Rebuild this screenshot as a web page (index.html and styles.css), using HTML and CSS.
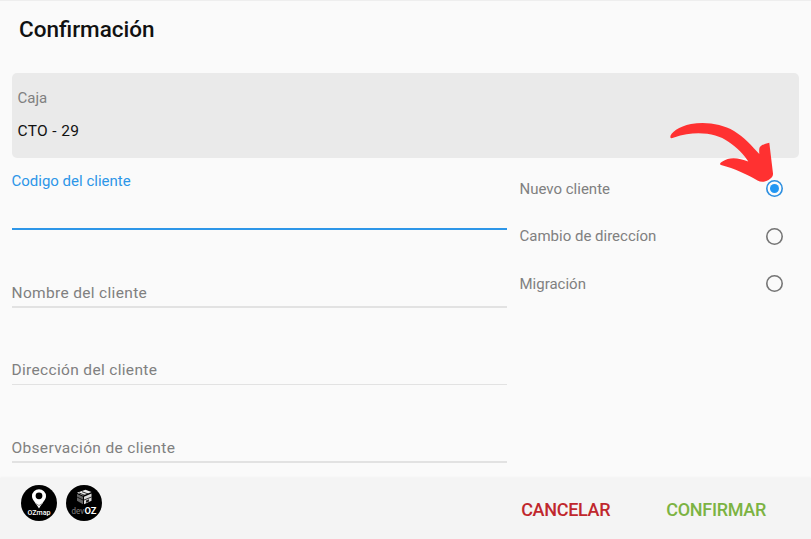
FILE: index.html
```html
<!DOCTYPE html>
<html lang="es">
<head>
  <meta charset="UTF-8">
  <meta name="viewport" content="width=device-width, initial-scale=1.0">
  <title>Confirmación</title>
  <link rel="stylesheet" href="styles.css">
</head>
<body>
  <main class="page">
    <h1 class="title"><span>Confirmación</span></h1>
    <section class="box">
      <div class="box-label"><span>Caja</span></div>
      <div class="box-value"><span>CTO - 29</span></div>
    </section>
    <form class="form">
      <div class="fields">
        <div class="field active"><label>Codigo del cliente</label></div>
        <div class="field"><label>Nombre del cliente</label></div>
        <div class="field thin"><label>Dirección del cliente</label></div>
        <div class="field"><label>Observación de cliente</label></div>
      </div>
      <div class="options">
        <div class="option"><span>Nuevo cliente</span><i class="radio checked"></i></div>
        <div class="option"><span>Cambio de direccíon</span><i class="radio"></i></div>
        <div class="option"><span>Migración</span><i class="radio"></i></div>
      </div>
    </form>
  </main>
  <footer class="footer">
    <div class="logos">
      <svg class="logo" viewBox="0 0 36 36">
        <circle cx="18" cy="18" r="18" fill="#000"/>
        <path d="M18 4.300a7 7 0 0 0-7 7c0 3.500 3.400 6 7 12.200 3.600-6.200 7-8.700 7-12.200a7 7 0 0 0-7-7z" fill="#fff"/>
        <circle cx="18" cy="10.800" r="3.400" fill="#000"/>
        <path d="M14 18.200l4 2.300 4-2.300" fill="none" stroke="#777" stroke-width=".8"/>
        <text class="logo-text small" x="6.500" y="30" textLength="23" lengthAdjust="spacingAndGlyphs">OZmap</text>
      </svg>
      <svg class="logo" viewBox="0 0 36 36">
        <circle cx="18" cy="18" r="18" fill="#000"/>
        <path d="M11 7.800l8.500-3 6 2.200-8.500 3.500z" fill="#eee"/>
        <path d="M11 9l6 2.700v7.500l-6-3.500z" fill="#666"/>
        <path d="M18 11.700l7.500-3.200v7.300L18 19.300z" fill="#ddd"/>
        <path d="M13 7.900l6 2.500M16 6.700l6 2.200M18 15l7.500-3M11 12l6 3" stroke="#000" stroke-width=".8"/>
        <path d="M20 15.500l3-1.200v2.200l-3 1.300z" fill="#222"/>
        <text class="logo-text" x="5.500" y="28.500" textLength="12.500" lengthAdjust="spacingAndGlyphs" fill-opacity=".5">dev</text>
        <text class="logo-text oz" x="18.500" y="28.500" textLength="12" lengthAdjust="spacingAndGlyphs">OZ</text>
      </svg>
    </div>
    <button class="cancel">CANCELAR</button>
    <button class="confirm">CONFIRMAR</button>
  </footer>
  <svg class="arrow" viewBox="669 122 106 62">
    <path d="M670.500 137.700C669 134 678 126.500 691 124C706 121.500 722 124 734 131C744 137 752 146 759.300 154C759 149 759 147 761.500 145.500C764 144 766.500 143.500 769.300 142.700L773 173.500C773.300 177 771 178.500 768.500 180C765 182 761 182.500 757.500 180.500C746 174 735 168.500 721 165C719 164 720.500 163 722 161.800C730 156 739 158 748.300 161.500C744 155 738 148 728 141.500C717 133.500 696 130 674 137.500C672 138.200 671 138.500 670.500 137.700Z"/>
  </svg>
</body>
</html>
```
FILE: styles.css
```css
* {
  box-sizing: border-box;
}
body {
  margin: 0;
  height: 539px;
  display: flex;
  flex-direction: column;
  overflow: hidden;
  background: #fafafa;
  border-top: 1px solid #eee;
  font-family: Roboto, sans-serif;
  font-size: 15px;
  color: #808080;
}
.page {
  flex: 1;
  padding: 0 12px 0 11.500px;
}
.title {
  margin: 0;
  padding: 14px 7.500px 0;
  height: 72px;
  font-size: 22.500px;
  line-height: 29px;
  font-weight: 500;
  color: #111;
}
.box {
  height: 85px;
  padding: 15px 6px;
  border-radius: 5px;
  background: #eaeaea;
  line-height: 20px;
}
.box-value {
  margin-top: 13px;
  color: #111;
  font-size: 15.500px;
  letter-spacing: .35px;
}
.form {
  display: flex;
  gap: 13px;
}
.fields {
  width: 495px;
}
.field {
  height: 77.600px;
  display: flex;
  align-items: flex-end;
  padding-bottom: 2.500px;
  border-bottom: 2px solid #e2e2e2;
  font-size: 15.500px;
  line-height: 20px;
  letter-spacing: .33px;
}
.field.thin {
  padding-bottom: 4px;
  border-bottom-width: 1px;
}
.field.active {
  height: 72px;
  align-items: flex-start;
  padding-top: 13px;
  border-color: #2d96e8;
  color: #2d96e8;
  font-size: 15px;
  letter-spacing: 0;
}
.options {
  flex: 1;
  padding: 7px 16px 0 0;
}
.option {
  height: 47.500px;
  display: flex;
  align-items: center;
  justify-content: space-between;
}
.radio {
  width: 17px;
  height: 17px;
  display: flex;
  border-radius: 50%;
  box-shadow: inset 0 0 0 1.600px #757575;
}
.radio.checked {
  box-shadow: inset 0 0 0 1.600px #2d8fe0;
}
.radio.checked::after {
  content: "";
  width: 9px;
  height: 9px;
  margin: auto;
  border-radius: 50%;
  background: #2196f3;
}
.footer {
  height: 61px;
  display: flex;
  align-items: center;
  padding: 2px 45px 0 21px;
  background: #f4f4f4;
  box-shadow: 0 -1px 2px rgba(0,0,0,0.03);
}
.logos {
  flex: 1;
  display: flex;
  gap: 9px;
  margin-bottom: 14px;
}
.logo {
  width: 36px;
  height: 36px;
}
.logo-text {
  font-size: 9px;
  fill: #fff;
}
.logo-text.small {
  font-size: 8px;
  font-weight: 500;
}
.logo-text.oz {
  font-weight: 700;
}
button {
  padding: 0;
  border: none;
  background: none;
  font: 500 18px Roboto, sans-serif;
  letter-spacing: -.3px;
}
.cancel {
  margin-right: 56px;
  color: #c0272d;
}
.confirm {
  color: #7cb342;
}
.arrow {
  position: absolute;
  left: 669px;
  top: 122px;
  width: 106px;
  height: 62px;
  fill: #ff3131;
}
```
